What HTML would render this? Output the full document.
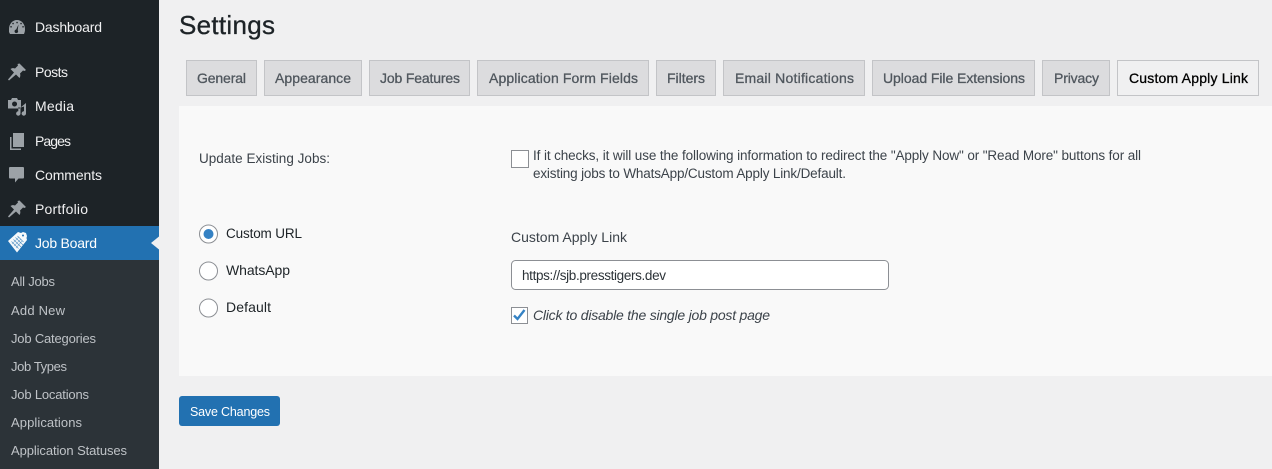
<!DOCTYPE html>
<html lang="en"><head><meta charset="utf-8"><title>Settings</title>
<style>
html,body{margin:0;padding:0;width:1272px;height:469px;overflow:hidden;background:#f0f0f1}
svg{position:absolute;left:0;top:0;display:block}
text{font-family:"Liberation Sans",Arial,sans-serif}
.n{font-size:14px;fill:#f0f0f1}
.s{font-size:13px;fill:#bfc3c7}
.t{font-size:14px;fill:#50575e;stroke:#50575e;stroke-width:.3}
.b{font-size:13.5px;fill:#3c434a}
.i{fill:#9ca2a7}
</style></head><body>
<svg width="1272" height="469" viewBox="0 0 1272 469" xmlns="http://www.w3.org/2000/svg">
<rect width="1272" height="469" fill="#f0f0f1"/>
<rect width="159" height="469" fill="#1d2327"/>
<rect y="226" width="159" height="34" fill="#2271b1"/>
<rect y="260" width="159" height="209" fill="#2c3338"/>
<path d="M159 236.500l-8 6.500 8 6.500z" fill="#f0f0f1"/>

<!-- dashboard -->
<path class="i" fill-rule="evenodd" d="M9 32c0-1 0-2 0-3 0-5 3.500-9 8-9s8 4 8 9c0 1 0 2-.3 3l-.7 2H10zM13 22.800a.8.8 0 1 0 .1 0zM17 21.800a.8.8 0 1 0 .1 0zM21 22.800a.8.8 0 1 0 .1 0zM11 26a.8.8 0 1 0 .1 0zM23 26a.8.8 0 1 0 .1 0zM18.500 24.500l-2.300 5a1.800 1.800 0 1 0 1.500.6z"/>
<!-- posts pin -->
<path class="i" d="M19.500 63.500l6.500 6.500-1.500 1-1.500-.5-3 3c.5 1.500.5 3-.5 4.500l-3.500-3.500-7 6-1-1 6-7-3.500-3.500c1.500-1 3-1 4.500-.5l3-3-.5-1.500z"/>
<!-- media -->
<path class="i" fill-rule="evenodd" d="M8 100h3l1-2h5l1 2h3v8.500H8zM14.500 101.500a2.500 2.500 0 1 0 .1 0zM26 103v10.500a2.200 2.200 0 1 1-2.200-2.200l.2 0v-4.800l-3.500 1v6a2.200 2.200 0 1 1-2.200-2.200v-3.300l-.3-.5h2.500z"/>
<!-- pages -->
<path class="i" d="M13 133h11v14H13z"/>
<path class="i" d="M10 137h1.500v11.500H21v1.500H10z"/>
<path fill="#1d2327" d="M11.500 136h1.500v11h8v1.500h-9.500z"/>
<!-- comments -->
<path class="i" d="M10 167h13a1 1 0 0 1 1 1v9.500a1 1 0 0 1-1 1h-4.500l-3.500 4v-4h-5a1 1 0 0 1-1-1V168a1 1 0 0 1 1-1z"/>
<!-- portfolio pin -->
<path class="i" d="M19.500 200.500l6.500 6.500-1.500 1-1.500-.5-3 3c.5 1.500.5 3-.5 4.500l-3.500-3.500-7 6-1-1 6-7-3.500-3.500c1.500-1 3-1 4.500-.5l3-3-.5-1.500z"/>
<!-- job board tag -->
<path fill="#f6f9fb" d="M8 241l10-9 3 1 2-1 3 1 1 3-.5 2 .5 2-10 12.500z"/>
<path stroke="#2271b1" stroke-width=".7" opacity=".75" fill="none" d="M11.500 241.500l7 7M13.500 239.500l7.500 7.500M15.500 237.500l7.500 7.500M17.500 236l6 6"/>
<path stroke="#2271b1" stroke-width=".7" opacity=".5" fill="none" d="M12 244l7-7M14 246l7-7M16 248l6-7"/>
<circle cx="23" cy="235.500" r="1" fill="#2271b1"/>

<text class="n" x="35" y="32" textLength="67">Dashboard</text>
<text class="n" x="35" y="77" textLength="33">Posts</text>
<text class="n" x="35" y="111" textLength="39">Media</text>
<text class="n" x="35" y="146" textLength="36">Pages</text>
<text class="n" x="35" y="180" textLength="67">Comments</text>
<text class="n" x="35" y="214" textLength="53">Portfolio</text>
<text class="n" x="35" y="248" textLength="62" style="fill:#fff">Job Board</text>
<text class="s" x="11" y="286" textLength="44">All Jobs</text>
<text class="s" x="11" y="315" textLength="54">Add New</text>
<text class="s" x="11" y="343" textLength="85">Job Categories</text>
<text class="s" x="11" y="371" textLength="56">Job Types</text>
<text class="s" x="11" y="399" textLength="78">Job Locations</text>
<text class="s" x="11" y="427" textLength="71">Applications</text>
<text class="s" x="11" y="455" textLength="116">Application Statuses</text>

<text x="179" y="34" textLength="96" style="font-size:26px;fill:#1d2327;stroke:#1d2327;stroke-width:.3">Settings</text>

<g fill="#dcdcde" stroke="#c3c4c7">
<rect x="186.500" y="60.500" width="70" height="35"/>
<rect x="264.500" y="60.500" width="97" height="35"/>
<rect x="369.500" y="60.500" width="100" height="35"/>
<rect x="477.500" y="60.500" width="171" height="35"/>
<rect x="656.500" y="60.500" width="59" height="35"/>
<rect x="723.500" y="60.500" width="141" height="35"/>
<rect x="872.500" y="60.500" width="162" height="35"/>
<rect x="1042.500" y="60.500" width="67" height="35"/>
<rect x="1117.500" y="60.500" width="141" height="35" fill="#f0f0f1"/>
</g>
<text class="t" x="197" y="83" textLength="49">General</text>
<text class="t" x="275" y="83" textLength="76">Appearance</text>
<text class="t" x="380" y="83" textLength="80">Job Features</text>
<text class="t" x="489" y="83" textLength="149">Application Form Fields</text>
<text class="t" x="667" y="83" textLength="38">Filters</text>
<text class="t" x="735" y="83" textLength="119">Email Notifications</text>
<text class="t" x="883" y="83" textLength="142">Upload File Extensions</text>
<text class="t" x="1054" y="83" textLength="45">Privacy</text>
<text class="t" x="1129" y="83" textLength="119" style="fill:#000;stroke:#000">Custom Apply Link</text>

<rect x="179" y="106" width="1093" height="270" fill="#f9f9f9"/>

<text class="b" x="199" y="163" textLength="131">Update Existing Jobs:</text>
<rect x="511.500" y="150.500" width="17" height="17" fill="#fff" stroke="#8c8f94"/>
<text class="b" x="533" y="160" textLength="608">If it checks, it will use the following information to redirect the "Apply Now" or "Read More" buttons for all</text>
<text class="b" x="533" y="178" textLength="313">existing jobs to WhatsApp/Custom Apply Link/Default.</text>

<g fill="#fff" stroke="#8c8f94">
<circle cx="208.500" cy="234" r="9"/>
<circle cx="208.500" cy="271" r="9"/>
<circle cx="208.500" cy="308" r="9"/>
</g>
<circle cx="208.500" cy="234" r="5" fill="#3582c4"/>
<text x="226" y="238" textLength="76" style="font-size:13.500px;fill:#1d2327">Custom URL</text>
<text x="226" y="275" textLength="64" style="font-size:14px;fill:#1d2327">WhatsApp</text>
<text x="226" y="312" textLength="45" style="font-size:14px;fill:#1d2327">Default</text>

<text class="b" x="511" y="242" textLength="116" style="font-size:14px">Custom Apply Link</text>
<rect x="511.500" y="260.500" width="377" height="29" rx="4" fill="#fff" stroke="#8c8f94"/>
<text x="522" y="280" textLength="144" style="font-size:13.500px;fill:#2c3338">https://sjb.presstigers.dev</text>
<rect x="511.500" y="307.500" width="16" height="16" fill="#fff" stroke="#8c8f94"/>
<path d="M514 315.500l3.500 3.500 7-9" fill="none" stroke="#3582c4" stroke-width="2.400"/>
<text x="533" y="320" textLength="237" style="font-size:14px;font-style:italic;fill:#3c434a">Click to disable the single job post page</text>

<rect x="179" y="396" width="101" height="30" rx="3" fill="#2271b1"/>
<text x="190" y="416" textLength="80" style="font-size:12.500px;fill:#fff">Save Changes</text>
</svg>
</body></html>
